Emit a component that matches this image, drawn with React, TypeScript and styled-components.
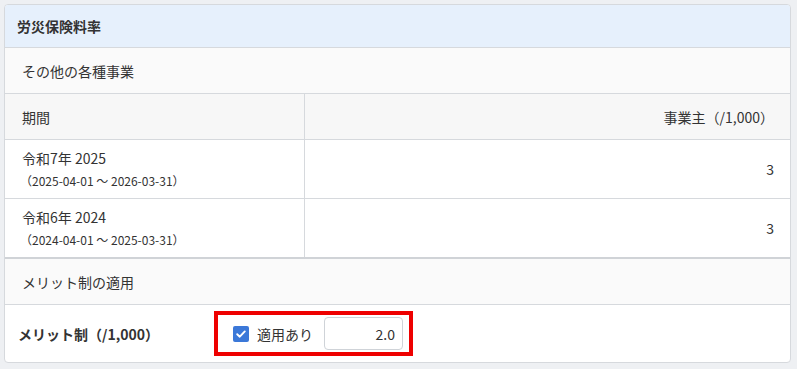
import { createGlobalStyle } from "styled-components";
import styled from "styled-components";

const GlobalStyle = createGlobalStyle`
    html, body {
        margin: 0;
        padding: 0;
        background: #eef0f3;
    }
    body {
        font-family: "Noto Sans CJK JP", "Noto Sans", sans-serif;
        color: #333;
        font-size: 14px;
    }
`

const Page = styled.div`
    padding: 4px 6px 6px 4px;
`

const Card = styled.div`
    background: #fff;
    border: 1px solid #d6d9dd;
    border-radius: 4px;
    overflow: hidden;
`

const CardHeader = styled.div`
    display: flex;
    align-items: center;
    height: 42px;
    padding: 0 12px;
    background: #e6f0fc;
    border-bottom: 1px solid #d6d9dd;
    font-weight: 700;
    font-size: 14px;
`

const SectionTitle = styled.div<{ $topRule?: boolean }>`
    display: flex;
    align-items: center;
    height: 45px;
    padding: 0 17px;
    background: #fafafa;
    border-top: ${p => p.$topRule ? "2px solid #d0d3d7" : "none"};
    border-bottom: 1px solid #d6d9dd;
`

const Table = styled.div`
    display: grid;
    grid-template-columns: 300px 1fr;
`

const Cell = styled.div<{ $head?: boolean; $right?: boolean; $last?: boolean }>`
    display: flex;
    flex-direction: column;
    justify-content: center;
    align-items: ${p => p.$right ? "flex-end" : "flex-start"};
    padding: 0 ${p => p.$right ? "16px" : "17px"} 0 17px;
    height: ${p => p.$head ? "45px" : "58px"};
    background: ${p => p.$head ? "#f7f7f7" : "#fff"};
    border-bottom: ${p => p.$last ? "none" : "1px solid #d6d9dd"};
    &:nth-child(odd) {
        border-right: 1px solid #d6d9dd;
    }
`

const PeriodName = styled.div`
    line-height: 20px;
`

const PeriodRange = styled.div`
    font-size: 12px;
    line-height: 18px;
    margin-top: 4px;
    margin-left: -2px;
`

const MeritRow = styled.div`
    display: flex;
    align-items: center;
    height: 57px;
    padding: 0 13px;
`

const MeritLabel = styled.div`
    width: 196px;
    font-weight: 700;
`

const Highlight = styled.div`
    display: flex;
    align-items: center;
    gap: 8px;
    padding: 1px 6px 1px 15px;
    border: 4px solid #ee0000;
    height: 35px;
    box-sizing: content-box;
`

const CheckBox = styled.span`
    display: inline-flex;
    align-items: center;
    justify-content: center;
    width: 16px;
    height: 16px;
    border-radius: 2px;
    background: #3b78d8;
`

const CheckText = styled.span`
    margin-right: 3px;
`

const NumberInput = styled.div`
    display: flex;
    align-items: center;
    justify-content: flex-end;
    width: 63px;
    height: 31px;
    padding: 0 7px;
    border: 1px solid #cfd3d8;
    border-radius: 4px;
    background: #fff;
`

const periods = [
    { name: "令和7年 2025", range: "（2025-04-01 ～ 2026-03-31）", rate: "3" },
    { name: "令和6年 2024", range: "（2024-04-01 ～ 2025-03-31）", rate: "3" },
]

export default function App() {
    return (
        <>
            <GlobalStyle />
            <Page>
                <Card>
                    <CardHeader>労災保険料率</CardHeader>
                    <SectionTitle>その他の各種事業</SectionTitle>
                    <Table>
                        <Cell $head>期間</Cell>
                        <Cell $head $right>事業主（/1,000）</Cell>
                        {periods.map((p, i) => [
                            <Cell key={p.name} $last={i === periods.length - 1}>
                                <PeriodName>{p.name}</PeriodName>
                                <PeriodRange>{p.range}</PeriodRange>
                            </Cell>,
                            <Cell key={p.name + "r"} $right $last={i === periods.length - 1}>{p.rate}</Cell>,
                        ])}
                    </Table>
                    <SectionTitle $topRule>メリット制の適用</SectionTitle>
                    <MeritRow>
                        <MeritLabel>メリット制（/1,000）</MeritLabel>
                        <Highlight>
                            <CheckBox>
                                <svg width="12" height="12" viewBox="0 0 12 12" fill="none">
                                    <path d="M2.2 6.2 L4.8 8.7 L9.8 3.4" stroke="#fff" strokeWidth="1.9" strokeLinecap="round" strokeLinejoin="round" />
                                </svg>
                            </CheckBox>
                            <CheckText>適用あり</CheckText>
                            <NumberInput>2.0</NumberInput>
                        </Highlight>
                    </MeritRow>
                </Card>
            </Page>
        </>
    )
}
